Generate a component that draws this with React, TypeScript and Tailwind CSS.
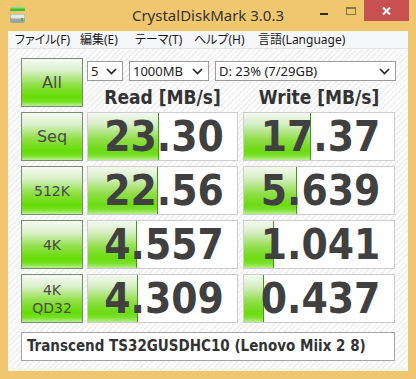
const rows = [
  { label: ['Seq'], comic: true, read: '23.30', readBar: 71, write: '17.37', writeBar: 67 },
  { label: ['512K'], comic: false, read: '22.56', readBar: 70, write: '5.639', writeBar: 53 },
  { label: ['4K'], comic: false, read: '4.557', readBar: 49, write: '1.041', writeBar: 30 },
  { label: ['4K', 'QD32'], comic: false, read: '4.309', readBar: 50, write: '0.437', writeBar: 20 },
];

const menu = [
  { text: 'ファイル(F)', w: 'w-[65px]' },
  { text: '編集(E)', w: 'w-[55px]' },
  { text: 'テーマ(T)', w: 'w-[59px]' },
  { text: 'ヘルプ(H)', w: 'w-[64px]' },
  { text: '言語(Language)', w: 'w-[100px]' },
];

function Chevron() {
  return (
    <svg width="11" height="7" viewBox="0 0 11 7" className="shrink-0">
      <path d="M1 1 L5.5 5.5 L10 1" fill="none" stroke="#222" strokeWidth="1.6" />
    </svg>
  );
}

function Select({ value, width }: { value: string; width: string }) {
  return (
    <div className={`flex h-[20px] ${width} items-center justify-between border border-[#9a9a9a] bg-white pl-[3px] pr-[5px] text-[13px] leading-none text-[#222]`}>
      <span>{value}</span>
      <Chevron />
    </div>
  );
}

function GreenButton({ lines, comic }: { lines: string[]; comic: boolean }) {
  return (
    <div className="flex h-full w-[62px] shrink-0 flex-col items-center justify-center border border-[#7a8c76] bg-[linear-gradient(to_bottom,#f6faf3_0%,#d9f0c8_25%,#8fe046_55%,#66dc05_80%,#74e01e_90%,#b9f092_100%)] font-['DejaVu_Sans',sans-serif] text-[#4a4a4a]">
      {lines.map((l) => (
        <span
          key={l}
          className={comic ? 'text-[16px] leading-[18px]' : 'text-[14px] leading-[18px]'}
        >
          {l}
        </span>
      ))}
    </div>
  );
}

function Cell({ value, bar, width }: { value: string; bar: number; width: string }) {
  return (
    <div className={`relative h-full ${width} shrink-0 border border-[#cdcdcd] bg-white`}>
      <div
        className="absolute bottom-0 left-0 top-0 border-r border-[#3c9c18] bg-[linear-gradient(to_bottom,#f4f9f1_0%,#d5eec2_25%,#92df4c_55%,#6cdb12_80%,#7ae02a_90%,#b5ee8c_100%)]"
        style={{ width: bar }}
      />
      <span className="relative flex h-full items-center justify-center pl-[3px] text-[42px] font-bold leading-none text-[#404040]">
        {value}
      </span>
    </div>
  );
}

export default function App() {
  return (
    <div className="flex h-[379px] w-[416px] flex-col bg-[#f0c76e] font-['DejaVu_Sans_Condensed','DejaVu_Sans',sans-serif]">
      {/* title bar */}
      <div className="relative flex h-[31px] shrink-0 items-start">
        <svg width="18" height="18" viewBox="0 0 18 18" className="ml-[9px] mt-[6px]">
          <path d="M2 1 H16 V5 H1 Z" fill="#3fbf2a" />
          <path d="M2 1 H16 V2.5 H2 Z" fill="#8fe37a" />
          <rect x="1" y="8" width="15" height="9" rx="2" fill="#9ea3a6" />
          <rect x="1.5" y="8.5" width="14" height="4" rx="1.5" fill="#e6e8ea" />
          <rect x="12" y="12" width="2" height="3" fill="#39c21f" />
        </svg>
        <span className="absolute left-0 right-0 top-[5px] text-center font-['Noto_Sans',sans-serif] text-[15px] leading-[20px] text-[#333]">
          CrystalDiskMark 3.0.3
        </span>
        <div className="ml-auto flex items-start">
          <div className="mt-[13px] h-[2px] w-[8px] bg-[#2a2a2a]" />
          <div className="ml-[18px] mt-[7px] h-[8px] w-[10px] border border-t-2 border-[#8a7242]" />
          <div className="ml-[8px] flex h-[21px] w-[45px] items-center justify-center bg-[#c75050]">
            <svg width="9" height="8" viewBox="0 0 9 8">
              <path d="M1 0.5 L8 7.5 M8 0.5 L1 7.5" stroke="#fff" strokeWidth="2" />
            </svg>
          </div>
          <div className="w-[7px]" />
        </div>
      </div>

      {/* client */}
      <div className="mx-[8px] mb-[8px] flex flex-1 flex-col">
        <div className="flex h-[18px] shrink-0 items-center border-b border-[#e3e5e8] bg-[#f5f6f7] pl-[7px] font-['Noto_Sans','Noto_Sans_CJK_JP',sans-serif] text-[12px] leading-none text-[#1a1a1a] [font-feature-settings:'palt']">
          {menu.map((m) => (
            <span key={m.text} className={`${m.w} shrink-0 whitespace-nowrap`}>
              {m.text}
            </span>
          ))}
        </div>

        <div className="flex flex-1 flex-col bg-[repeating-linear-gradient(135deg,#ffffff_0px,#ffffff_2px,#f1f1f1_2px,#f1f1f1_4px)] px-[13px] pt-[9px]">
          {/* top row */}
          <div className="flex h-[49px]">
            <GreenButton lines={['All']} comic />
            <div className="ml-[4px] flex flex-1 flex-col">
              <div className="mt-[3px] flex gap-[6px] font-['Noto_Sans',sans-serif]">
                <Select value="5" width="w-[36px]" />
                <Select value="1000MB" width="w-[80px]" />
                <Select value="D: 23% (7/29GB)" width="w-[181px]" />
              </div>
              <div className="mt-[6px] flex text-[19px] font-bold leading-[20px] text-[#333]">
                <span className="w-[151px] text-center">Read [MB/s]</span>
                <span className="ml-[5px] w-[152px] text-center">Write [MB/s]</span>
              </div>
            </div>
          </div>

          {rows.map((r) => (
            <div key={r.read} className="mt-[5px] flex h-[49px]">
              <GreenButton lines={r.label} comic={r.comic} />
              <div className="ml-[4px]" />
              <Cell value={r.read} bar={r.readBar} width="w-[151px]" />
              <div className="ml-[5px]" />
              <Cell value={r.write} bar={r.writeBar} width="w-[152px]" />
            </div>
          ))}

          <div className="mt-[9px] flex h-[29px] items-center border border-[#a4a4a4] bg-white pl-[5px] text-[15px] font-bold text-[#333]">
            Transcend TS32GUSDHC10 (Lenovo Miix 2 8)
          </div>
        </div>
      </div>
    </div>
  );
}
